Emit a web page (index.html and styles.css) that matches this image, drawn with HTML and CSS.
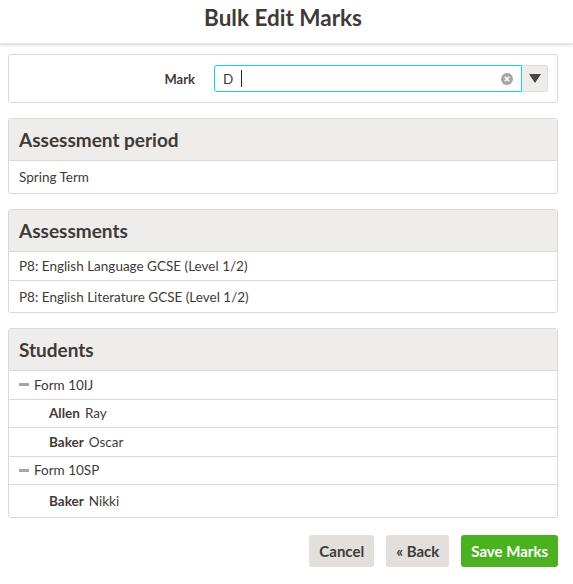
FILE: index.html
```html
<!DOCTYPE html>
<html lang="en">

<head>
    <meta charset="UTF-8">
    <title>Bulk Edit Marks</title>
    <link rel="stylesheet" href="styles.css">
</head>

<body>

    <header class="topbar">
        <h1>Bulk Edit Marks</h1>
    </header>

    <main class="content">
        <section class="panel mark-panel">
            <label class="mark-label" for="markInput">Mark</label>
            <div class="combo">
                <div class="combo-field">
                    <span class="combo-value">D</span>
                    <span class="caret"></span>
                    <svg class="clear" width="12" height="12" viewBox="0 0 12 12">
                        <circle cx="6" cy="6" r="6" fill="#a9a6a4" />
                        <path d="M3.8 3.8 L8.2 8.2 M8.2 3.8 L3.8 8.2" stroke="#fff" stroke-width="1.6" />
                    </svg>
                </div>
                <button class="combo-toggle" type="button">
                    <svg width="12" height="9" viewBox="0 0 12 9">
                        <path d="M0 0 H12 L6 9 Z" fill="#4a4542" />
                    </svg>
                </button>
            </div>
        </section>

        <section class="panel">
            <h2 class="panel-head">Assessment period</h2>
            <div class="row period">Spring Term</div>
        </section>

        <section class="panel">
            <h2 class="panel-head">Assessments</h2>
            <div class="row">P8: English Language GCSE (Level 1/2)</div>
            <div class="row">P8: English Literature GCSE (Level 1/2)</div>
        </section>

        <section class="panel students">
            <h2 class="panel-head">Students</h2>
            <div class="row group"><span class="dash"></span>Form 10IJ</div>
            <div class="row student"><b>Allen</b> Ray</div>
            <div class="row student"><b>Baker</b> Oscar</div>
            <div class="row group"><span class="dash"></span>Form 10SP</div>
            <div class="row student"><b>Baker</b> Nikki</div>
        </section>

        <div class="actions">
            <button class="btn" type="button">Cancel</button>
            <button class="btn" type="button">&laquo; Back</button>
            <button class="btn btn-save" type="button">Save Marks</button>
        </div>
    </main>

</body>

</html>
```

FILE: styles.css
```css
* {
    margin: 0;
    padding: 0;
    box-sizing: border-box;
}

body {
    font-family: 'Lato', 'Open Sans', sans-serif;
    color: #3f3a37;
    background: #fff;
    font-size: 13px;
}

.topbar {
    height: 44px;
    display: flex;
    justify-content: center;
    align-items: center;
    box-shadow: 0 1px 3px rgba(0, 0, 0, 0.18);
    border-bottom: 1px solid #e6e6e6;
}

.topbar h1 {
    font-size: 22.5px;
    font-weight: 700;
    margin-right: 7px;
    margin-top: -8px;
}

.content {
    margin: 10px 15px 0 8px;
}

.panel {
    border: 1px solid #dcdad9;
    border-radius: 3px;
    margin-bottom: 15px;
    overflow: hidden;
}

.mark-panel {
    display: flex;
    align-items: center;
    height: 49px;
    padding: 0 9px 0 0;
}

.mark-label {
    width: 186px;
    text-align: right;
    font-weight: 700;
    font-size: 13px;
    margin-right: 19px;
}

.combo {
    flex: 1;
    display: flex;
    height: 27px;
}

.combo-field {
    flex: 1;
    display: flex;
    align-items: center;
    border: 1px solid #11d2e8;
    border-radius: 3px 0 0 3px;
    padding: 0 8px;
    font-size: 13.5px;
}

.combo-value {
    margin-right: 8px;
}

.caret {
    width: 1px;
    height: 17px;
    background: #222;
}

.clear {
    margin-left: auto;
}

.combo-toggle {
    width: 26px;
    border: 1px solid #e0dedc;
    border-left: none;
    border-radius: 0 3px 3px 0;
    background: #efedeb;
    display: flex;
    align-items: center;
    justify-content: center;
}

.panel-head {
    background: #efedeb;
    height: 42px;
    display: flex;
    align-items: center;
    padding: 0 10px;
    font-size: 19px;
    font-weight: 700;
    border-bottom: 1px solid #dcdad9;
}

.row {
    padding: 0 10px;
    height: 29px;
    display: flex;
    align-items: center;
    border-bottom: 1px solid #dcdad9;
    font-size: 13.5px;
}

.students .row {
    height: 28.5px;
}

.row:last-child {
    border-bottom: none;
    height: 31px;
}

.students .row:last-child {
    height: 32px;
}

.row.period {
    height: 32px;
}

.row b {
    margin-right: 5px;
}

.student {
    padding-left: 40px;
}

.dash {
    width: 10px;
    height: 3px;
    background: #a9a6a4;
    margin-right: 5px;
}

.actions {
    display: flex;
    justify-content: flex-end;
    gap: 12px;
    margin-top: 17px;
}

.btn {
    font-family: inherit;
    font-size: 15px;
    font-weight: 700;
    color: #3f3a37;
    background: #e2dfdd;
    border: none;
    border-radius: 3px;
    height: 32px;
    padding: 0 10px;
}

.btn-save {
    background: #4cb121;
    color: #fff;
}
```
